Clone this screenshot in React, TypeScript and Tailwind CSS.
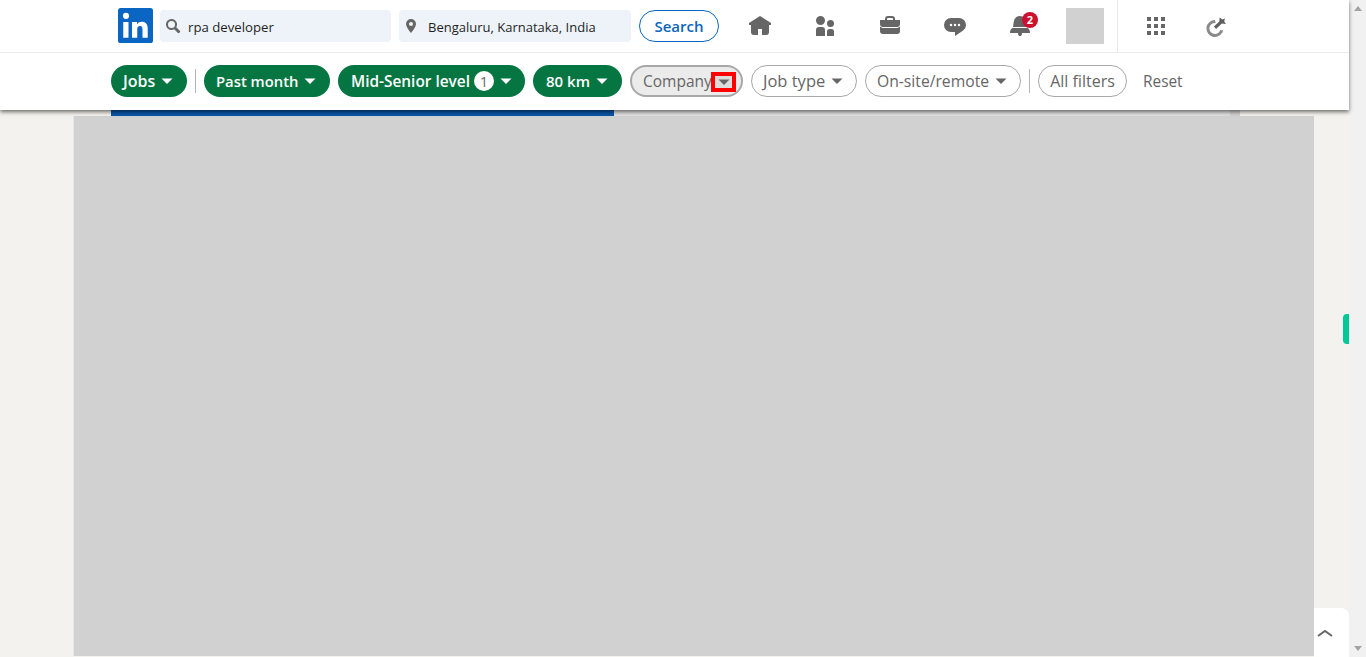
import React from "react";

const Caret = ({ className }: { className: string }) => (
  <svg viewBox="0 0 16 16" className={className} fill="currentColor">
    <path d="M8 11 2.5 5.5h11z" />
  </svg>
);

const NavIcon = ({ d }: { d: string }) => (
  <div className="w-[65px] h-[52px] flex items-center justify-center text-[#666666]">
    <svg viewBox="0 0 24 24" className="w-6 h-6" fill="currentColor">
      <path d={d} />
    </svg>
  </div>
);

const Active = ({ label, w, size, pad, badge }: { label: string; w: string; size: string; pad: string; badge?: boolean }) => (
  <div className={`${w} ${pad} h-8 rounded-full bg-[#057642] text-white font-semibold flex items-center shrink-0`}>
    <span className={`${size} whitespace-nowrap`}>{label}</span>
    {badge && (
      <span className="ml-[4px] w-5 h-5 rounded-full bg-white text-[#666666] text-[14px] font-normal flex items-center justify-center">1</span>
    )}
    <Caret className="w-4 h-4 ml-[4px]" />
  </div>
);

const Plain = ({ label, w, size }: { label: string; w: string; size: string }) => (
  <div className={`${w} h-8 rounded-full border border-[#a8a8a8] text-[#666666] flex items-center pl-[11px] shrink-0`}>
    <span className={`${size} whitespace-nowrap`}>{label}</span>
    <Caret className="w-4 h-4 ml-[4px]" />
  </div>
);

const Sep = () => <div className="w-px h-6 bg-[#b5b5b5] shrink-0" />;

export default function App() {
  return (
    <div className="h-[657px] w-[1366px] overflow-hidden flex bg-[#f4f2ee] text-[15px]" style={{ fontFamily: '"Open Sans", "Noto Sans", sans-serif' }}>
      <div className="w-[1349px] h-full flex flex-col relative">
        <header className="relative z-10 bg-white shadow-[0_2px_4px_rgba(0,0,0,0.55)]">
          <div className="h-[53px] border-b border-[#ebebeb] flex items-center pl-[118px]">
            <svg viewBox="2 2 20 20" className="w-[35px] h-[35px] shrink-0 mb-px" fill="#0a66c2">
              <path d="M20.5 2h-17A1.5 1.5 0 002 3.5v17A1.5 1.5 0 003.5 22h17a1.5 1.5 0 001.5-1.5v-17A1.5 1.5 0 0020.5 2zM8 19H5v-9h3zM6.5 8.25A1.75 1.75 0 118.3 6.5a1.78 1.78 0 01-1.8 1.75zM19 19h-3v-4.74c0-1.42-.6-1.93-1.38-1.93A1.74 1.74 0 0013 14.19a.66.66 0 000 .14V19h-3v-9h2.9v1.3a3.11 3.11 0 012.7-1.4c1.55 0 3.36.86 3.36 3.66z" />
            </svg>
            <div className="ml-[7px] w-[231px] h-8 mb-[1px] rounded bg-[#edf3f8] flex items-center pl-[5px] text-[13.2px] text-[#1f1f1f]">
              <svg viewBox="0 0 16 16" className="w-4 h-4 text-[#666666]" fill="currentColor">
                <path d="M14.56 12.44L11.3 9.18a5.51 5.51 0 10-2.12 2.12l3.26 3.26a1.5 1.5 0 102.12-2.12zM3 6.5A3.5 3.5 0 116.5 10 3.5 3.5 0 013 6.5z" />
              </svg>
              <span className="ml-[7px] pt-[4px]">rpa developer</span>
            </div>
            <div className="ml-2 w-[232px] h-8 mb-[1px] rounded bg-[#edf3f8] flex items-center pl-[4px] text-[13px] text-[#1f1f1f]">
              <svg viewBox="0 0 16 16" className="w-4 h-4 text-[#666666]" fill="currentColor">
                <path d="M8 1a5 5 0 00-5 5c0 3 5 9 5 9s5-6 5-9a5 5 0 00-5-5zm0 7a2 2 0 110-4 2 2 0 010 4z" />
              </svg>
              <span className="ml-[9px] pt-[4px]">Bengaluru, Karnataka, India</span>
            </div>
            <div className="ml-2 w-20 h-8 mb-[1px] pt-[2px] rounded-full border border-[#0a66c2] text-[#0a66c2] font-semibold flex items-center justify-center">Search</div>
            <div className="ml-[8px] flex">
              <NavIcon d="M23 9v2h-2v7a3 3 0 01-3 3h-4v-6h-4v6H6a3 3 0 01-3-3v-7H1V9l11-7z" />
              <NavIcon d="M12 16v6H3v-6a3 3 0 013-3h3a3 3 0 013 3zm5.5-3A3.5 3.5 0 1014 9.5a3.5 3.5 0 003.5 3.5zm1 2h-2a2.5 2.5 0 00-2.5 2.5V22h7v-4.5a2.5 2.5 0 00-2.5-2.5zM7.5 2A4.5 4.5 0 1012 6.5 4.49 4.49 0 007.5 2z" />
              <NavIcon d="M17 6V5a3 3 0 00-3-3h-4a3 3 0 00-3 3v1H2v4a3 3 0 003 3h14a3 3 0 003-3V6zM9 5a1 1 0 011-1h4a1 1 0 011 1v1H9zm10 9a4 4 0 003-1.38V17a3 3 0 01-3 3H5a3 3 0 01-3-3v-4.38A4 4 0 005 14z" />
              <NavIcon d="M16 4H8a7 7 0 000 14h4v4l8.16-5.39A6.78 6.78 0 0023 11a7 7 0 00-7-7zm-8 8.25A1.25 1.25 0 119.25 11 1.25 1.25 0 018 12.25zm4 0A1.25 1.25 0 1113.25 11 1.25 1.25 0 0112 12.25zm4 0A1.25 1.25 0 1117.25 11 1.25 1.25 0 0116 12.25z" />
              <div className="relative">
                <NavIcon d="M22 19h-8.28a2 2 0 11-3.44 0H2v-1a4.52 4.52 0 011.17-2.83l1-1.17h15.7l1 1.17A4.42 4.42 0 0122 18zM18.21 7.44A6.27 6.27 0 0012 2a6.27 6.27 0 00-6.21 5.44L5 13h14z" />
                <span className="absolute left-[35px] top-[12px] w-4 h-4 rounded-full bg-[#cb112d] text-white text-[11px] font-bold flex items-center justify-center">2</span>
              </div>
            </div>
            <div className="ml-[14px] w-[38px] h-[36px] mb-px bg-[#d1d1d1]" />
            <div className="ml-[13px] w-px h-[52px] bg-[#ebebeb]" />
            <div className="ml-[26px] w-6 h-6 text-[#666666]">
              <svg viewBox="0 0 24 24" className="w-6 h-6" fill="currentColor">
                <path d="M3 3h4v4H3zm7 4h4V3h-4zm7-4v4h4V3zM3 14h4v-4H3zm7 0h4v-4h-4zm7 0h4v-4h-4zM3 21h4v-4H3zm7 0h4v-4h-4zm7 0h4v-4h-4z" />
              </svg>
            </div>
            <div className="ml-[36px] w-6 h-6">
              <svg viewBox="0 0 24 24" className="w-6 h-6">
                <path d="M11 6a8.5 8.5 0 1 0 8.2 10.5l-3-.6A5.5 5.5 0 1 1 11.6 9z" fill="#8a8a8a" />
                <path d="M10 12.6 15.4 7.6 15.6 3.6 18.4 5.4 20.9 4.4 20.2 7.4 22 10 17.8 9.6 12 15z" fill="#5e5e5e" />
              </svg>
            </div>
          </div>
          <div className="h-[57px] pb-px flex items-center gap-2 pl-[111px]">
            <Active label="Jobs" w="w-[76px]" size="text-[16px]" pad="pl-[12px]" />
            <Sep />
            <Active label="Past month" w="w-[126px]" size="text-[14.8px]" pad="pl-[12px]" />
            <Active label="Mid-Senior level" w="w-[187px]" size="text-[15.4px] pt-[2px]" pad="pl-[13px]" badge />
            <Active label="80 km" w="w-[89px]" size="text-[15px]" pad="pl-[13px]" />
            <div className="relative w-[113px] h-8 rounded-full border-2 border-[#a8a8a8] bg-[#ebebeb] text-[#666666] flex items-center pl-[11px] shrink-0">
              <span className="text-[15.5px] pt-[2px]">Company</span>
              <span className="absolute left-[79px] top-[5px] w-[25px] h-[20px] border-[4px] border-[#ff0000] bg-[#dcdcdc] flex items-center justify-center">
                <Caret className="w-4 h-4" />
              </span>
            </div>
            <Plain label="Job type" w="w-[106px]" size="text-[16.5px]" />
            <Plain label="On-site/remote" w="w-[156px]" size="text-[15.7px] pt-[2px]" />
            <Sep />
            <div className="w-[89px] h-8 rounded-full border border-[#a8a8a8] text-[#666666] text-[16px] flex items-center justify-center shrink-0">All filters</div>
            <div className="ml-2 text-[#666666] text-[15.4px] pt-[2px]">Reset</div>
          </div>
        </header>
        <main className="flex-1 min-h-0 pl-[73px] flex flex-col">
          <div className="h-[6px] shrink-0 ml-[38px] w-[1129px] bg-[#d1d1d1]">
            <div className="w-[1119px] h-full bg-[#e0e0e0]">
              <div className="w-[503px] h-full bg-[#0a55a8]" />
            </div>
          </div>
          <div className="w-[1241px] flex-1 min-h-0 bg-[#d1d1d1] border-l border-[#e8e8e8]" />
          <div className="h-px shrink-0" />
        </main>
        <div className="absolute right-0 top-[314px] w-[6px] h-[30px] rounded-l-[4px] bg-[#00c896]" />
        <div className="absolute right-0 bottom-0 w-[35px] h-[49px] bg-white rounded-tr-[8px] flex items-center justify-start pl-[3px] text-[#666666]">
          <svg viewBox="0 0 16 16" className="w-4 h-4" fill="none" stroke="currentColor" strokeWidth="2">
            <path d="M1 11l7-5 7 5" />
          </svg>
        </div>
      </div>
      <aside className="w-[17px] h-full bg-[#f1f1f1] flex flex-col justify-between items-center py-[6px] text-[#a3a3a3]">
        <svg viewBox="0 0 8 5" className="w-2 h-[5px]" fill="currentColor"><path d="M4 0 8 5H0z" /></svg>
        <svg viewBox="0 0 8 5" className="w-2 h-[5px]" fill="currentColor"><path d="M4 5 8 0H0z" /></svg>
      </aside>
    </div>
  );
}
